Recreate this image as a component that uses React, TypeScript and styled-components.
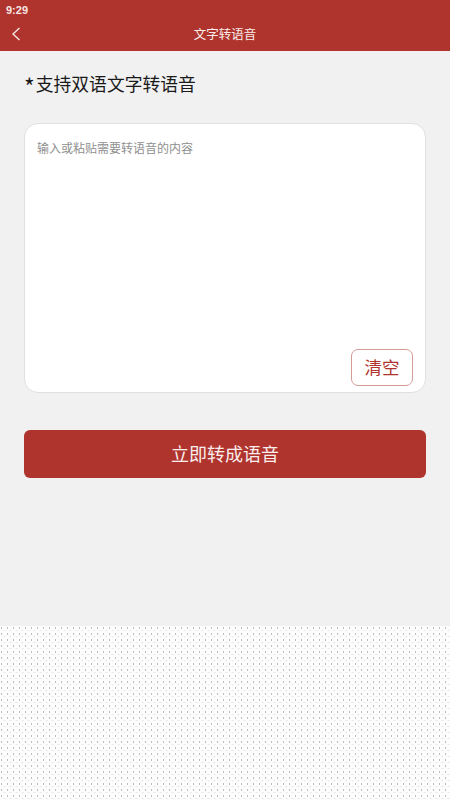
import { createGlobalStyle, styled } from 'styled-components';

const GlobalStyle = createGlobalStyle`
  html, body {
    margin: 0;
    padding: 0;
    background: #f1f1f1;
    font-family: "Noto Sans CJK SC", "Liberation Sans", sans-serif;
  }
  * {
    box-sizing: border-box;
  }
`;

const BackIcon = () => (
  <svg width="12" height="18" viewBox="0 0 12 18" fill="none">
    <path d="M9.5 3 L3 9 L9.5 15" stroke="#f6e6e4" strokeWidth="1.4" />
  </svg>
);

const App = () => (
  <Page>
    <GlobalStyle />
    <Header>
      <StatusBar>9:29</StatusBar>
      <NavBar>
        <BackButton>
          <BackIcon />
        </BackButton>
        <NavTitle>文字转语音</NavTitle>
      </NavBar>
    </Header>
    <Content>
      <Heading>
        <Mark>*</Mark>支持双语文字转语音
      </Heading>
      <InputCard>
        <Placeholder>输入或粘贴需要转语音的内容</Placeholder>
        <ClearRow>
          <ClearButton>清空</ClearButton>
        </ClearRow>
      </InputCard>
      <SubmitButton>立即转成语音</SubmitButton>
    </Content>
    <Dither />
  </Page>
);

export default App;

const Page = styled.div`
  width: 450px;
  height: 800px;
  display: flex;
  flex-direction: column;
  overflow: hidden;
  background: #f1f1f1;
`;

const Header = styled.header`
  height: 51px;
  background: #b0342e;
  color: #fff;
`;

const StatusBar = styled.div`
  height: 17px;
  padding: 4px 0 0 6px;
  font-family: "Liberation Sans", sans-serif;
  font-size: 11px;
  line-height: 13px;
  font-weight: 700;
  color: #f6e6e4;
`;

const NavBar = styled.div`
  height: 34px;
  padding-bottom: 2px;
  display: flex;
  align-items: center;
  justify-content: center;
  position: relative;
`;

const BackButton = styled.div`
  position: absolute;
  left: 10px;
  top: 8px;
  display: flex;
`;

const NavTitle = styled.div`
  font-size: 12.5px;
  color: #f8eceb;
`;

const Content = styled.main`
  flex: 1;
  padding: 20px 24px 0;
`;

const Heading = styled.h1`
  margin: 0 0 28px 1px;
  font-size: 17.8px;
  line-height: 24px;
  font-weight: 400;
  color: #1a1a1a;
`;

const Mark = styled.span`
  margin: 0 1px 0 -1px;
  font-size: 23px;
  line-height: 0;
  vertical-align: -5px;
`;

const InputCard = styled.div`
  height: 270px;
  padding: 15px 12px 6px 12px;
  display: flex;
  flex-direction: column;
  justify-content: space-between;
  background: #fff;
  border: 1px solid #e0e0e0;
  border-radius: 14px;
`;

const Placeholder = styled.div`
  font-size: 12px;
  line-height: 17px;
  color: #8f8f8f;
`;

const ClearRow = styled.div`
  display: flex;
  justify-content: flex-end;
`;

const ClearButton = styled.div`
  width: 62px;
  height: 37px;
  padding-bottom: 2px;
  display: flex;
  align-items: center;
  justify-content: center;
  border: 1px solid #d69a97;
  border-radius: 7px;
  background: #fff;
  color: #b0342e;
  font-size: 17.5px;
`;

const SubmitButton = styled.div`
  height: 48px;
  margin-top: 37px;
  padding-bottom: 2px;
  display: flex;
  align-items: center;
  justify-content: center;
  background: #b0342e;
  border-radius: 6px;
  color: #f9eeed;
  font-size: 18px;
`;

const Dither = styled.div`
  height: 174px;
  background-color: #fdfdfd;
  background-image:
    radial-gradient(ellipse 0.8px 1.3px at 1.5px 2px, #bdbdbd 60%, transparent 100%),
    radial-gradient(ellipse 1.2px 0.8px at 4.5px 4.5px, #e4e4e4 60%, transparent 100%);
  background-size: 6px 6px;
`;
